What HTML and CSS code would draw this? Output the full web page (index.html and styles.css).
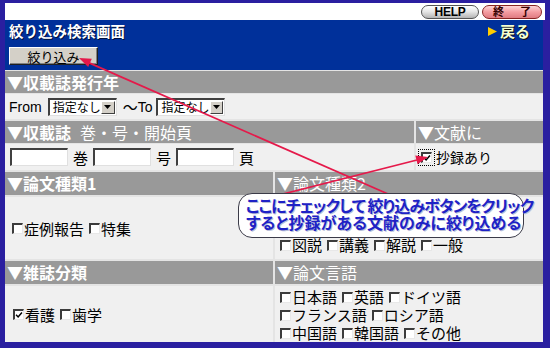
FILE: index.html
```html
<!DOCTYPE html>
<html lang="ja">
<head>
<meta charset="utf-8">
<title>絞り込み検索画面</title>
<link rel="stylesheet" href="styles.css">
</head>
<body>
<div class="frame">
  <div class="topbar">
    <span class="pill pill-help">HELP</span>
    <span class="pill pill-quit"><span>終</span><span>了</span></span>
  </div>
  <div class="nav">
    <div class="nav-row">
      <h1 class="title">絞り込み検索画面</h1>
      <span class="back"><svg class="tri" viewBox="0 0 10 10" width="9" height="9"><polygon points="0,0 10,5 0,10" fill="#ffcc00"/></svg>戻る</span>
    </div>
    <button class="btn" type="button">絞り込み</button>
  </div>
  <div class="main">
    <section class="sec sec-a">
      <div class="hd"><b>▼収載誌発行年</b></div>
      <div class="cell row-from">
        <span class="latin from">From</span>
        <span class="select"><span class="sel-text">指定なし</span><span class="drop"><svg width="7" height="4" viewBox="0 0 7 4"><polygon points="0,0 7,0 3.5,4" fill="#000"/></svg></span></span>
        <span class="tilde">～</span><span class="latin to">To</span>
        <span class="select"><span class="sel-text">指定なし</span><span class="drop"><svg width="7" height="4" viewBox="0 0 7 4"><polygon points="0,0 7,0 3.5,4" fill="#000"/></svg></span></span>
      </div>
    </section>
    <section class="sec sec-b">
      <div class="hd"><b>▼収載誌</b><span class="sub">巻・号・開始頁</span></div>
      <div class="hd">▼文献に</div>
      <div class="cell row-vol">
        <input class="field" type="text"><span class="unit">巻</span><input class="field" type="text"><span class="unit">号</span><input class="field" type="text"><span class="unit">頁</span>
      </div>
      <div class="cell row-abs">
        <span class="cb checked focus"><svg width="9" height="8" viewBox="0 0 9 8"><path d="M1.2 3.8 L3.5 6.2 L7.8 1.2" fill="none" stroke="#000" stroke-width="1.7"/></svg></span>抄録あり
      </div>
    </section>
    <section class="sec sec-c">
      <div class="hd"><b>▼論文種類1</b></div>
      <div class="hd">▼論文種類2</div>
      <div class="cell row-left">
        <span class="opt"><span class="cb"></span>症例報告</span><span class="opt"><span class="cb"></span>特集</span>
      </div>
      <div class="cell lines lines-kind">
        <div class="line"><span class="opt"><span class="cb"></span>図説</span><span class="opt"><span class="cb"></span>講義</span><span class="opt"><span class="cb"></span>解説</span><span class="opt"><span class="cb"></span>一般</span></div>
      </div>
    </section>
    <section class="sec sec-d">
      <div class="hd"><b>▼雑誌分類</b></div>
      <div class="hd">▼論文言語</div>
      <div class="cell row-left row-journal">
        <span class="opt"><span class="cb checked"><svg width="9" height="8" viewBox="0 0 9 8"><path d="M1.2 3.8 L3.5 6.2 L7.8 1.2" fill="none" stroke="#000" stroke-width="1.7"/></svg></span>看護</span><span class="opt"><span class="cb"></span>歯学</span>
      </div>
      <div class="cell lines lines-lang">
        <div class="line"><span class="opt"><span class="cb"></span>日本語</span><span class="opt"><span class="cb"></span>英語</span><span class="opt"><span class="cb"></span>ドイツ語</span></div>
        <div class="line"><span class="opt"><span class="cb"></span>フランス語</span><span class="opt"><span class="cb"></span>ロシア語</span></div>
        <div class="line"><span class="opt"><span class="cb"></span>中国語</span><span class="opt"><span class="cb"></span>韓国語</span><span class="opt"><span class="cb"></span>その他</span></div>
      </div>
    </section>
  </div>
  <svg class="arrows" width="550" height="348" viewBox="0 0 550 348">
    <line x1="88" y1="62.4" x2="420" y2="208" stroke="#e5194a" stroke-width="1.7"/>
    <polygon points="79,58 88.2,67 91.8,58.7" fill="#e5194a"/>
    <line x1="417" y1="160" x2="240" y2="205" stroke="#e5194a" stroke-width="1.7"/>
    <polygon points="428,157 415.3,155.6 417.5,164.3" fill="#e5194a"/>
  </svg>
  <div class="bubble">
    <div class="bubble-line bl-1">ここにチェックして 絞り込みボタンをクリック</div>
    <div class="bubble-line">すると抄録がある文献のみに絞り込める</div>
  </div>
</div>
</body>
</html>
```

FILE: styles.css
```css
* { box-sizing: border-box; }
html, body { margin: 0; padding: 0; }
body {
  width: 550px;
  height: 348px;
  overflow: hidden;
  background: #2a1fa0;
  font-family: "Noto Sans CJK JP", "Noto Sans", sans-serif;
  color: #000;
}
.frame {
  position: relative;
  width: 550px;
  height: 348px;
  padding: 3px 7px 0 5px;
}

/* top white bar */
.topbar {
  height: 17px;
  margin-right: -2px;
  background: #fff;
  display: flex;
  justify-content: flex-end;
  align-items: center;
  gap: 3px;
  padding-right: 3px;
}
.pill {
  height: 14px;
  border-radius: 7px;
  display: flex;
  align-items: center;
  justify-content: center;
  font-weight: bold;
  line-height: 1;
}
.pill-help {
  width: 58px;
  border: 1px solid #555;
  background: linear-gradient(#ffffff 0%, #e8e8e8 45%, #b4b4b4 100%);
  font-family: "Liberation Sans", Arial, sans-serif;
  font-size: 12px;
  letter-spacing: -0.3px;
}
.pill-quit {
  width: 60px;
  border: 1px solid #8a2424;
  background: linear-gradient(#ffd6d6 0%, #f49ca1 50%, #e07c82 100%);
  font-size: 11px;
  gap: 16px;
  color: #300;
}

/* navy title bar */
.nav {
  height: 50px;
  background: #00309a;
  padding: 0 13px 0 4px;
}
.nav-row {
  height: 22px;
  display: flex;
  justify-content: space-between;
  align-items: center;
}
.title {
  margin: 0;
  font-size: 14.5px;
  line-height: 22px;
  font-weight: bold;
  color: #fff;
  text-shadow: 1px 1px 0 #00123d;
}
.back {
  display: flex;
  align-items: center;
  gap: 3px;
  font-size: 15px;
  font-weight: bold;
  color: #f4ffd2;
  text-shadow: 1px 1px 0 #111;
  line-height: 22px;
}
.tri { display: block; }
.btn {
  display: block;
  margin: 5px 0 0;
  padding: 0;
  width: 89px;
  height: 18px;
  background: #d4d0c8;
  border: 1px solid;
  border-color: #fff #202020 #202020 #fff;
  box-shadow: inset -1px -1px 0 #808080;
  font-family: inherit;
  font-size: 13px;
  line-height: 15px;
  color: #000;
  text-align: center;
}

/* form table */
.main {
  display: flex;
  flex-direction: column;
  gap: 2px;
  padding-top: 1px;
  background: #e4e4e4;
}
.sec { display: grid; column-gap: 2px; }
.sec-a { grid-template-rows: 22px 25px; row-gap: 1px; }
.sec-b { grid-template-columns: 409px 127px; grid-template-rows: 22px 26px; row-gap: 1px; }
.sec-c { grid-template-columns: 268px 268px; grid-template-rows: 23px 62px; row-gap: 2px; }
.sec-d { grid-template-columns: 268px 268px; grid-template-rows: 23px 56px; row-gap: 2px; }

.hd {
  background: #999;
  color: #fff;
  font-size: 16px;
  line-height: 22px;
  padding-left: 2px;
  white-space: nowrap;
  overflow: hidden;
}
.sec-c .hd, .sec-d .hd { line-height: 23px; }
.hd b { font-weight: bold; }
.hd .sub { margin-left: 9px; }

.cell {
  background: #f0f0f0;
  font-size: 15px;
  display: flex;
  align-items: center;
  white-space: nowrap;
}

.latin { font-family: "Liberation Sans", Arial, sans-serif; font-size: 14px; }
.row-from { padding-left: 4px; }
.from { margin-right: 6px; }
.tilde { margin-left: 6px; }
.to { margin-right: 4px; }

.select {
  display: inline-flex;
  align-items: center;
  justify-content: space-between;
  width: 69px;
  height: 18px;
  background: #fff;
  border-style: solid;
  border-width: 2px 1px 1px 2px;
  border-color: #404040 #e0e0e0 #e0e0e0 #404040;
  padding: 0 1px 0 3px;
  font-size: 12px;
  line-height: 14px;
}
.drop {
  width: 14px;
  height: 13px;
  background: #d4d0c8;
  border: 1px solid;
  border-color: #fff #404040 #404040 #fff;
  display: flex;
  align-items: center;
  justify-content: center;
}
.drop svg { display: block; }

.row-vol { padding-left: 5px; }
.field {
  display: block;
  width: 58px;
  height: 18px;
  margin: 0;
  padding: 0;
  background: #fff;
  border-style: solid;
  border-width: 2px 1px 1px 2px;
  border-color: #404040 #e0e0e0 #e0e0e0 #404040;
}
.unit { margin: 0 5px; }

.row-abs { padding-left: 5px; font-size: 14px; }

.cb {
  display: inline-flex;
  align-items: center;
  justify-content: center;
  flex: none;
  width: 11px;
  height: 11px;
  background: #fff;
  border-style: solid;
  border-width: 2px 1px 1px 2px;
  border-color: #3c3c3c #e8e8e8 #e8e8e8 #3c3c3c;
}
.cb svg { display: block; }
.focus {
  margin-right: 4px;
  outline: 1px dotted #000;
  outline-offset: 2px;
}

.row-left { padding-left: 7px; }
.row-journal { padding-left: 8px; }
.opt {
  display: inline-flex;
  align-items: center;
  gap: 1px;
  margin-right: 5px;
}

.lines {
  flex-direction: column;
  align-items: flex-start;
  padding-left: 5px;
}
.line {
  display: flex;
  align-items: center;
  height: 18px;
  line-height: 18px;
}
.lines-kind { justify-content: flex-end; padding-bottom: 5px; }
.lines-lang { justify-content: flex-start; padding-top: 2px; }

/* overlay annotations */
.arrows {
  position: absolute;
  left: 0;
  top: 0;
  pointer-events: none;
}
.bubble {
  position: absolute;
  left: 238px;
  top: 193px;
  width: 286px;
  height: 45px;
  background: #fff;
  border: 1.5px solid #3b3b48;
  border-radius: 14px;
  padding: 3px 0 0 7px;
  color: #1e22c6;
  font-size: 16px;
  line-height: 17px;
  font-weight: bold;
  font-feature-settings: "palt";
  white-space: nowrap;
  text-shadow: 1px 1px 0 #b9bfd9;
}
.bl-1 { letter-spacing: -0.9px; }
```
